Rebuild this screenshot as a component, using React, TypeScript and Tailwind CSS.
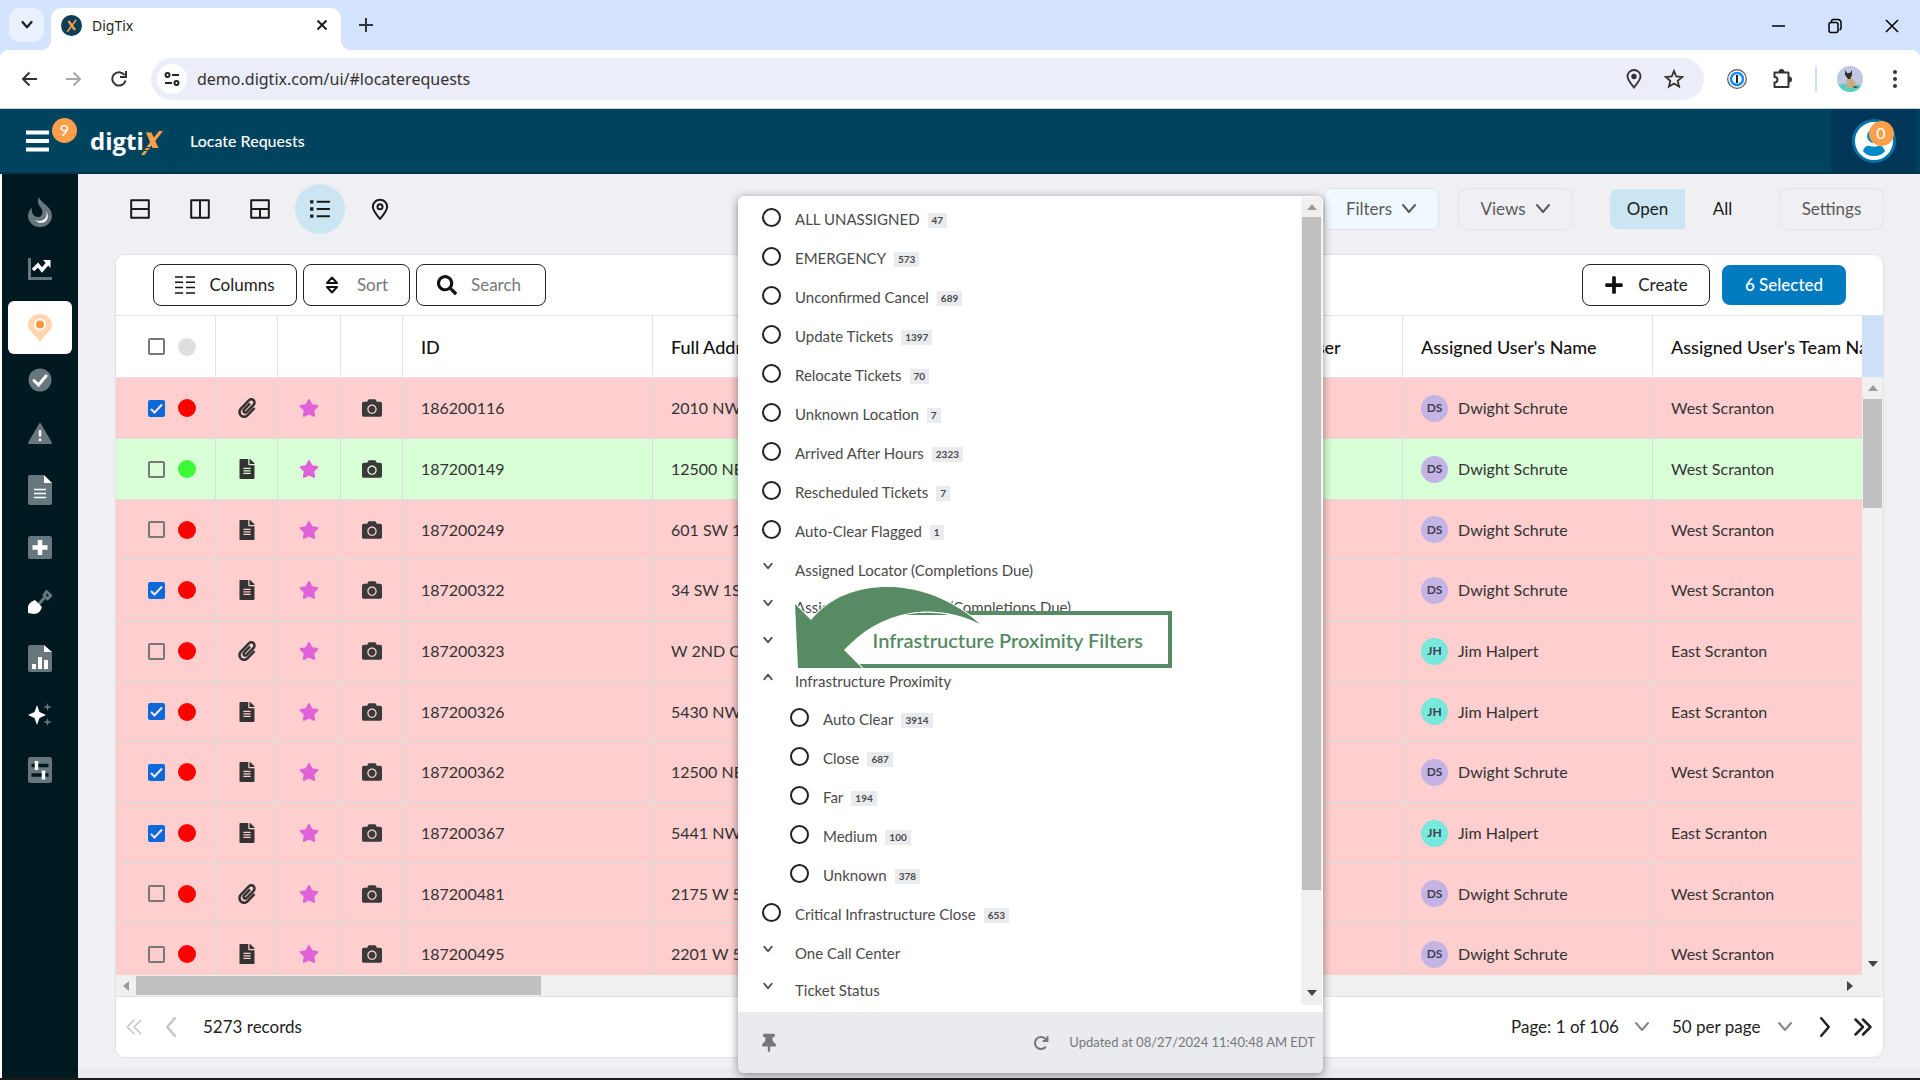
import type { ReactNode } from 'react';
import { FaCamera, FaFileAlt, FaPaperclip, FaPlus, FaSearch, FaStar, FaThumbtack } from 'react-icons/fa';
import { FaArrowRotateRight } from 'react-icons/fa6';

interface Ticket {
  id: string;
  address: string;
  user: 'DS' | 'JH';
  selected?: boolean;
  clipped?: boolean;
  ok?: boolean;
}

interface FilterItem {
  label: string;
  count?: number;
  kind: 'radio' | 'group';
  open?: boolean;
  nested?: boolean;
}

const tickets: Ticket[] = [
  { id: '186200116', address: '2010 NW', user: 'DS', selected: true, clipped: true },
  { id: '187200149', address: '12500 NE', user: 'DS', ok: true },
  { id: '187200249', address: '601 SW 12', user: 'DS' },
  { id: '187200322', address: '34 SW 1ST', user: 'DS', selected: true },
  { id: '187200323', address: 'W 2ND CT', user: 'JH', clipped: true },
  { id: '187200326', address: '5430 NW', user: 'JH', selected: true },
  { id: '187200362', address: '12500 NE', user: 'DS', selected: true },
  { id: '187200367', address: '5441 NW', user: 'JH', selected: true },
  { id: '187200481', address: '2175 W 5', user: 'DS', clipped: true },
  { id: '187200495', address: '2201 W 5', user: 'DS' },
];

const users = {
  DS: { name: 'Dwight Schrute', team: 'West Scranton', color: 'bg-[#c3b4e3]' },
  JH: { name: 'Jim Halpert', team: 'East Scranton', color: 'bg-[#76e8dc]' },
};

const filters: FilterItem[] = [
  { label: 'ALL UNASSIGNED', count: 47, kind: 'radio' },
  { label: 'EMERGENCY', count: 573, kind: 'radio' },
  { label: 'Unconfirmed Cancel', count: 689, kind: 'radio' },
  { label: 'Update Tickets', count: 1397, kind: 'radio' },
  { label: 'Relocate Tickets', count: 70, kind: 'radio' },
  { label: 'Unknown Location', count: 7, kind: 'radio' },
  { label: 'Arrived After Hours', count: 2323, kind: 'radio' },
  { label: 'Rescheduled Tickets', count: 7, kind: 'radio' },
  { label: 'Auto-Clear Flagged', count: 1, kind: 'radio' },
  { label: 'Assigned Locator (Completions Due)', kind: 'group' },
  { label: 'Assigned Locator Team (Completions Due)', kind: 'group' },
  { label: 'Due', kind: 'group' },
  { label: 'Infrastructure Proximity', kind: 'group', open: true },
  { label: 'Auto Clear', count: 3914, kind: 'radio', nested: true },
  { label: 'Close', count: 687, kind: 'radio', nested: true },
  { label: 'Far', count: 194, kind: 'radio', nested: true },
  { label: 'Medium', count: 100, kind: 'radio', nested: true },
  { label: 'Unknown', count: 378, kind: 'radio', nested: true },
  { label: 'Critical Infrastructure Close', count: 653, kind: 'radio' },
  { label: 'One Call Center', kind: 'group' },
  { label: 'Ticket Status', kind: 'group' },
];

function Chevron({ className = '', d = 'M2 4l6 7 6-7', width = 2 }: { className?: string; d?: string; width?: number }) {
  return (
    <svg viewBox="0 0 16 16" className={className} fill="none" stroke="currentColor" strokeWidth={width} strokeLinecap="round" strokeLinejoin="round">
      <path d={d} />
    </svg>
  );
}

function Arrow({ dir, className = '' }: { dir: 'up' | 'down' | 'left' | 'right'; className?: string }) {
  const d = { up: 'M0 8l5-6 5 6z', down: 'M0 2l5 6 5-6z', left: 'M8 0L2 5l6 5z', right: 'M2 0l6 5-6 5z' }[dir];
  return (
    <svg viewBox="0 0 10 10" className={`size-[10px] ${className}`} fill="currentColor">
      <path d={d} />
    </svg>
  );
}

function Checkbox({ label, checked }: { label: string; checked?: boolean }) {
  return (
    <span className="relative flex size-[17px] shrink-0">
      <input
        type="checkbox"
        aria-label={label}
        defaultChecked={checked}
        className="peer size-[17px] appearance-none rounded-xs border-2 border-[#777] bg-transparent checked:border-[#0b69d9] checked:bg-[#0b69d9]"
      />
      <svg viewBox="0 0 17 17" className="pointer-events-none absolute inset-0 hidden size-[17px] peer-checked:block" fill="none" stroke="#ffe3e3" strokeWidth="2">
        <path d="M3 9l3.500 3.500L14 4.500" />
      </svg>
    </span>
  );
}

/* ---------- browser window ---------- */

function BrowserChrome() {
  return (
    <div className="bg-[#d3e3fd] font-['Noto_Sans',sans-serif] text-[#1f1f1f]">
      <div className="flex h-[50px] items-end pl-[9px]">
        <button aria-label="Search tabs" className="mb-2 flex h-[34px] w-[35px] items-center justify-center rounded-[10px] bg-[#e9f1fe]">
          <Chevron className="size-3" width={3} />
        </button>
        <div className="relative ml-[7px] flex h-[42px] w-[290px] items-center rounded-t-[10px] bg-white pr-3 pl-[10px]">
          <span className="absolute bottom-0 -left-[10px] size-[10px] bg-[radial-gradient(circle_at_0_0,#d3e3fd_10px,#fff_10px)]" />
          <span className="absolute -right-[10px] bottom-0 size-[10px] bg-[radial-gradient(circle_at_100%_0,#d3e3fd_10px,#fff_10px)]" />
          <svg viewBox="0 0 20 20" className="mb-2 size-[21px]">
            <circle cx="10" cy="10" r="10" fill="#0b3f58" />
            <path d="M6 6l2.500-.5 6 8.500-2.500.5z" fill="#f3a04b" />
            <path d="M14.500 4.500L6 16" stroke="#f3a04b" strokeWidth="1.500" />
          </svg>
          <span className="mb-[6px] ml-[10px] text-sm leading-5">DigTix</span>
          <button aria-label="Close tab" className="mb-2 ml-auto">
            <svg viewBox="0 0 14 14" className="size-[14px]" stroke="currentColor" strokeWidth="2">
              <path d="M2.500 2.500l9 9M11.500 2.500l-9 9" />
            </svg>
          </button>
        </div>
        <button aria-label="New tab" className="mb-[18px] ml-[18px]">
          <svg viewBox="0 0 14 14" className="size-[14px]" stroke="#333" strokeWidth="2">
            <path d="M7 0v14M0 7h14" />
          </svg>
        </button>
        <div className="mb-4 ml-auto flex items-center gap-[41px] pr-5">
          <button aria-label="Minimize">
            <svg viewBox="0 0 16 16" className="size-4" stroke="#000" strokeWidth="1.500"><path d="M2 8h13" /></svg>
          </button>
          <button aria-label="Restore">
            <svg viewBox="0 0 16 16" className="size-4" fill="none" stroke="#000" strokeWidth="1.500">
              <rect x="2" y="4.500" width="9" height="10" rx="2" />
              <path d="M4.500 4V2.500Q5 1.500 6.500 1.500H11a3 3 0 013 3V10q0 1.500-1.500 2" />
            </svg>
          </button>
          <button aria-label="Close window">
            <svg viewBox="0 0 16 16" className="size-4" stroke="#000" strokeWidth="1.500"><path d="M2 2l12 12M14 2L2 14" /></svg>
          </button>
        </div>
      </div>
      <div className="flex h-[59px] items-center rounded-t-lg border-b border-[#c8cfcf] bg-white pr-[15px] pl-[21px]">
        <button aria-label="Back">
          <svg viewBox="0 0 16 16" className="size-4" fill="none" stroke="#333" strokeWidth="2"><path d="M16 8H2M8.500 1.500L2 8l6.500 6.500" /></svg>
        </button>
        <button aria-label="Forward" className="ml-[29px]">
          <svg viewBox="0 0 16 16" className="size-4" fill="none" stroke="#a8a8a8" strokeWidth="2"><path d="M0 8h14M7.500 1.500L14 8l-6.500 6.500" /></svg>
        </button>
        <button aria-label="Reload" className="ml-[29px]">
          <svg viewBox="0 0 16 16" className="size-4" fill="none" stroke="#333" strokeWidth="2"><path d="M14.500 9.500A6.700 6.700 0 1113.500 4M15 0v6H9" /></svg>
        </button>
        <div className="ml-6 flex h-[42px] flex-1 items-center rounded-full bg-[#ebedf8] pr-5 pl-[6px]">
          <span className="flex size-[30px] items-center justify-center rounded-full bg-white">
            <svg viewBox="0 0 16 16" className="size-4" fill="none" stroke="#222" strokeWidth="2">
              <circle cx="3.500" cy="4" r="2" /><path d="M8 4h7M1 12h7" /><circle cx="12.500" cy="12" r="2" />
            </svg>
          </span>
          <input
            aria-label="Address"
            defaultValue="demo.digtix.com/ui/#locaterequests"
            className="ml-[10px] h-8 min-w-0 flex-1 bg-transparent text-base text-[#333] outline-none"
          />
          <svg viewBox="0 0 16 20" className="h-5 w-4" fill="none" stroke="#333" strokeWidth="1.800">
            <path d="M8 18.500C4 13.500 1.500 10.500 1.500 7.500a6.500 6.500 0 0113 0c0 3-2.500 6-6.500 11z" /><circle cx="8" cy="7.500" r="1.800" fill="#333" />
          </svg>
          <svg viewBox="0 0 20 20" className="ml-[22px] size-5" fill="none" stroke="#333" strokeWidth="1.800">
            <path d="M10 2l2.300 5.500 6 .5-4.600 3.900 1.400 5.800-5.100-3.100-5.100 3.100 1.400-5.800L1.700 8l6-.5z" />
          </svg>
        </div>
        <button aria-label="Password manager" className="ml-[23px]">
          <svg viewBox="0 0 20 20" className="size-5">
            <circle cx="10" cy="10" r="9.300" fill="#fff" stroke="#555" strokeWidth="1.200" />
            <circle cx="10" cy="10" r="6" fill="#fff" stroke="#1a8cff" strokeWidth="2.500" />
            <path d="M10 6v8" stroke="#222" strokeWidth="2" />
          </svg>
        </button>
        <button aria-label="Extensions" className="ml-[25px]">
          <svg viewBox="0 0 22 22" className="size-[22px]" fill="none" stroke="#333" strokeWidth="2" strokeLinejoin="round">
            <path d="M2.500 4.500h14v14.500h-14v-4.500c4 0 4-5.500 0-5.500z" />
            <path d="M7.500 4a2 2 0 014 0zM17 9.500a2 2 0 010 4z" fill="#333" />
          </svg>
        </button>
        <span className="ml-[21px] h-6 w-[2px] bg-[#c9dcfb]" />
        <svg viewBox="0 0 26 26" className="ml-5 size-[26px]">
          <clipPath id="profile"><circle cx="13" cy="13" r="13" /></clipPath>
          <g clipPath="url(#profile)">
            <path fill="#c0c8e4" d="M0 0h26v26H0z" />
            <path fill="#57cfc0" d="M0 19q13-3 26 1v6H0z" />
            <path fill="#c9ad80" d="M10 9h4l1 4 3 3 2 4-5 2H9l1-7z" />
            <path fill="#33302f" d="M8 4l2 3h3l2-3v5l-2 4h-2L8 9zM15 20l7 1-4 1z" />
          </g>
        </svg>
        <button aria-label="Menu" className="ml-[22px]">
          <svg viewBox="0 0 20 20" className="size-5" fill="#333"><circle cx="10" cy="3" r="2" /><circle cx="10" cy="10" r="2" /><circle cx="10" cy="17" r="2" /></svg>
        </button>
      </div>
    </div>
  );
}

/* ---------- application header ---------- */

function AppHeader() {
  return (
    <header className="flex h-[65px] shrink-0 items-stretch border-b-2 border-[#003550] bg-[#00435e] text-white">
      <div className="flex w-[172px] items-center border-r border-[#003d56] pl-[26px]">
        <button aria-label="Menu, 9 alerts" className="relative">
          <svg viewBox="0 0 23 22" className="h-[22px] w-[23px]" stroke="#fff" strokeWidth="4">
            <path d="M0 2.500h23M0 11h23M0 19.500h23" />
          </svg>
          <span className="absolute -top-3 left-[26px] flex size-[25px] items-center justify-center rounded-full bg-[#fd9f4a] text-base">9</span>
        </button>
        <a href="#home" className="ml-[41px] flex items-center">
          <span className="font-['Open_Sans',sans-serif] text-2xl leading-7 font-bold">digti</span>
          <svg viewBox="0 0 22 26" className="mt-1 -ml-[3px] h-[26px] w-[22px]" fill="#fd9f4a">
            <path d="M5 2.500h5.500l7 15.500h-6z" />
            <path d="M18 1h4L9.500 17H5.500zM5 18h4l-1.500 2h-4zM3 21h3.500L3.500 25H0z" />
          </svg>
        </a>
      </div>
      <h1 className="self-center pl-[18px] text-base font-medium">Locate Requests</h1>
      <div className="mr-1 ml-auto flex w-[85px] items-center justify-center bg-[#003657]">
        <button aria-label="Account" className="relative">
          <svg viewBox="0 0 44 44" className="size-11">
            <circle cx="22" cy="22" r="20.500" fill="#fff" stroke="#0072a8" strokeWidth="3" />
            <circle cx="22" cy="17" r="7" fill="#008ac7" />
            <path d="M11 32c1-4 4-6 7-5q4 1.500 8 0c3-1 6 1 7 5-2 3-6 5-11 5s-9-2-11-5z" fill="#008ac7" />
          </svg>
          <span className="absolute top-[2px] right-[2px] flex size-[25px] items-center justify-center rounded-full bg-[#fd9f4a] text-base">0</span>
        </button>
      </div>
    </header>
  );
}

function SideIcon({ label, active, h, children }: { label: string; active?: boolean; h: number; children: ReactNode }) {
  return (
    <a
      href={`#${label}`}
      aria-label={label}
      className={`flex items-center justify-center ${active ? 'mt-[5px] -mb-[2px] h-[53px] w-16 rounded-md bg-white' : 'py-[15px]'}`}
    >
      <svg width={24} height={h} viewBox={`0 0 24 ${h}`}>{children}</svg>
    </a>
  );
}

function Sidebar() {
  return (
    <nav className="ml-[2px] flex w-[76px] shrink-0 flex-col items-center gap-px bg-[#001820] pt-2 text-[#66777d]">
      <SideIcon label="hot" h={30}>
        <path d="M11 0c1 6 13 9 13 19a12 11 0 01-24 0c0-4 2-7 4-8-1 5 2 9 6 9s6-5 3-9c-3-4-4-6-2-11z" fill="currentColor" />
        <path d="M18 14c3 7-4 12-11 9 7 7 17 0 11-9z" fill="#fff" />
      </SideIcon>
      <SideIcon label="trends" h={22}>
        <path d="M1.500 0v20.500H24" stroke="currentColor" strokeWidth="3" fill="none" />
        <path d="M5 12l5-5 4 5 6-7" stroke="#fff" strokeWidth="3.500" fill="none" />
        <path d="M15 2h7.500v8z" fill="#fff" />
      </SideIcon>
      <SideIcon label="locate" h={28} active>
        <path d="M12 28C7 20 0 17 0 11a12 11 0 0124 0c0 6-7 9-12 17z" fill="#ffd5b0" />
        <circle cx="12" cy="10.500" r="5" fill="#fd9737" stroke="#fff" strokeWidth="2" />
      </SideIcon>
      <SideIcon label="completed" h={24}>
        <circle cx="12" cy="12" r="11.500" fill="currentColor" />
        <path d="M6 12.500l4.500 4.500L18 8" stroke="#fff" strokeWidth="3" fill="none" strokeLinecap="round" />
      </SideIcon>
      <SideIcon label="warnings" h={21}>
        <path d="M12 1l11 19H1z" fill="currentColor" stroke="currentColor" strokeWidth="2" strokeLinejoin="round" />
        <path d="M12 7v6.500M12 15.500v2.500" stroke="#fff" strokeWidth="2.500" />
      </SideIcon>
      <SideIcon label="documents" h={30}>
        <path d="M2 0h14v8h8v20q0 2-2 2H2q-2 0-2-2V2q0-2 2-2z" fill="currentColor" />
        <path d="M16 0l8 8h-8z" fill="#fff" />
        <path d="M6 14.500h12M6 18.500h12M6 22.500h12" stroke="#fff" strokeWidth="1.500" />
      </SideIcon>
      <SideIcon label="new" h={23}>
        <rect width="24" height="23" rx="2.500" fill="currentColor" />
        <path d="M12 4v15M4.500 11.500h15" stroke="#fff" strokeWidth="4.500" />
      </SideIcon>
      <SideIcon label="dig" h={24}>
        <path d="M10 15l8-9" stroke="currentColor" strokeWidth="3" />
        <path d="M16 5l2.500-3.500 4.500 4-3.500 3.500z" fill="none" stroke="currentColor" strokeWidth="3" strokeLinejoin="round" />
        <path d="M0 23v-6q0-4 7-7l7 7q-2 7-8 7z" fill="#fff" />
      </SideIcon>
      <SideIcon label="reports" h={27}>
        <path d="M2 0h14v7h8v18q0 2-2 2H2q-2 0-2-2V2q0-2 2-2z" fill="currentColor" />
        <path d="M16 0l8 7h-8z" fill="#fff" />
        <path d="M6 24v-5M12 24V12M18 24v-9" stroke="#fff" strokeWidth="4" />
      </SideIcon>
      <SideIcon label="assistant" h={23}>
        <path d="M9 2l2.500 7L18 12l-6.500 3L9 22l-2.500-7L0 12l6.500-3z" fill="#fff" />
        <path d="M19.500 0l1 3 3.500 1-3.500 1-1 3-1-3L15 4l3.500-1zM19.500 15l1 3 3.500 1-3.500 1-1 3-1-3-3.500-1 3.500-1z" fill="currentColor" />
      </SideIcon>
      <SideIcon label="preferences" h={26}>
        <rect width="24" height="26" rx="2.500" fill="currentColor" />
        <path d="M3.500 8.500h17M3.500 18h17" stroke="#001820" strokeWidth="3.500" />
        <path d="M8.500 4v9M15.500 13.500v9" stroke="#fff" strokeWidth="3.500" />
      </SideIcon>
    </nav>
  );
}

/* ---------- view bar and filter menu ---------- */

const viewModes = [
  { name: 'Rows', icon: <path d="M2 2h16v16H2zM2 10h16" /> },
  { name: 'Columns', icon: <path d="M2 2h16v16H2zM10 2v16" /> },
  { name: 'Split', icon: <path d="M2 2h16v16H2zM2 10h16M10 10v8" /> },
  {
    name: 'List',
    icon: (
      <>
        <path d="M7 3.500h12M7 10h12M7 16.500h12" />
        <path d="M1 3.500h3M1 10h3M1 16.500h3" strokeWidth="3" />
      </>
    ),
  },
  { name: 'Map', icon: <><path d="M10 19C6 14.500 3.500 11 3.500 8a6.500 6.500 0 0113 0c0 3-2.500 6.500-6.500 11z" /><circle cx="10" cy="8" r="2.300" /></> },
];

function FilterRow({ item }: { item: FilterItem }) {
  if (item.kind === 'group') {
    return (
      <li className={item.open ? 'h-[38px]' : 'h-[37px]'}>
        <button aria-expanded={!!item.open} className="flex items-start">
          <Chevron className="mt-[7px] mr-[21px] size-3" width={2.500} d={item.open ? 'M3 11l5-6 5 6' : 'M3 5l5 6 5-6'} />
          <span className="leading-[34px]">{item.label}</span>
        </button>
      </li>
    );
  }
  return (
    <li className={item.nested ? 'h-[39px] pl-7' : 'h-[39px]'}>
      <label className="flex w-fit items-start">
        <input
          type="radio"
          name="filter"
          className="mt-[6px] mr-[14px] size-[19px] appearance-none rounded-full border-2 border-[#222] checked:border-[6px]"
        />
        <span className="leading-[34px]">{item.label}</span>
        <span className="mt-[11px] ml-2 bg-[#eaebef] px-1 text-[10px] leading-[15px] font-bold">{item.count}</span>
      </label>
    </li>
  );
}

function FilterMenu() {
  return (
    <div className="absolute top-2 right-full z-10 mr-px flex h-[877px] w-[585px] flex-col overflow-hidden rounded-md bg-white text-[#4a4a4a] shadow-[0_2px_10px_rgba(0,0,0,0.45)]">
      <div className="flex min-h-0 flex-1">
        <ul className="flex-1 overflow-hidden pt-[6px] pl-6 text-[15px]">
          {filters.map((item) => (
            <FilterRow key={item.label} item={item} />
          ))}
        </ul>
        <div className="mt-px mr-px mb-[7px] flex w-[21px] flex-col items-center bg-[#f0f0f0]">
          <Arrow dir="up" className="my-[5px] text-[#9a9a9a]" />
          <div className="h-[673px] w-[19px] bg-[#c0c0c0]" />
          <Arrow dir="down" className="mt-auto mb-[7px] text-[#444]" />
        </div>
      </div>
      <div className="flex h-[61px] items-center bg-[#eaebef] pr-2 pl-6 text-[13px] text-[#75787b]">
        <button aria-label="Pin menu"><FaThumbtack className="h-5 w-[14px]" /></button>
        <button aria-label="Refresh" className="ml-auto"><FaArrowRotateRight className="size-4" /></button>
        <span className="ml-5 whitespace-nowrap">Updated at 08/27/2024 11:40:48 AM EDT</span>
      </div>

      {/* callout over the proximity group */}
      <div className="absolute top-[415px] left-[106px] flex h-[57px] w-[328px] items-center justify-end border-4 border-[#578b64] bg-white pr-[25px] text-xl font-semibold whitespace-nowrap text-[#578b64]">
        Infrastructure Proximity Filters
      </div>
      <svg viewBox="793 583 190 88" className="pointer-events-none absolute top-[387px] left-[55px] h-[88px] w-[190px]">
        <path d="M840 615h36l-14 48h-22zM866 615h90l-90 14zM844 613h80v-3h-80z" fill="#fff" />
        <path
          d="M795 604l16 16c20-24 48-34 82-33 36 2 66 18 87 37-27-13-50-14-70-11-28 5-48 18-66 37l18 18h-64z"
          fill="#578b64"
          stroke="#fff"
          strokeWidth="2"
          paintOrder="stroke"
        />
      </svg>
    </div>
  );
}

function ViewBar() {
  return (
    <div className="flex h-20 shrink-0 items-start pt-[10px] pr-9 pl-[37px]">
      <div className="flex items-center gap-[10px]">
        {viewModes.map((mode) => (
          <button
            key={mode.name}
            aria-label={mode.name}
            className={`flex size-[50px] items-center justify-center rounded-full ${mode.name === 'List' ? 'bg-[#cbe5f3]' : ''}`}
          >
            <svg viewBox="0 0 20 20" className="size-[22px]" fill="none" stroke="#1a1a1a" strokeWidth="1.800" strokeLinejoin="round">{mode.icon}</svg>
          </button>
        ))}
      </div>
      <div className="mt-1 ml-auto flex items-center text-[17px] text-[#5a5a5a]">
        <div className="relative">
          <button className="flex h-[42px] w-[115px] items-center justify-center gap-[9px] rounded-lg border border-[#e1e3e8] bg-[#f0f9ff]">
            Filters <Chevron className="size-4" />
          </button>
          <FilterMenu />
        </div>
        <button className="ml-[19px] flex h-[42px] w-[115px] items-center justify-center gap-[9px] rounded-lg border border-[#e1e3e8]">
          Views <Chevron className="size-4" />
        </button>
        <button className="ml-[37px] h-10 w-[75px] rounded-l-lg bg-[#cbe5f3] text-[#1a1a1a]">Open</button>
        <button className="h-10 w-[75px] text-[#1a1a1a]">All</button>
        <button className="ml-[19px] h-[42px] w-[105px] rounded-lg border border-[#e1e3e8]">Settings</button>
      </div>
    </div>
  );
}

/* ---------- ticket grid ---------- */

function TicketRow({ ticket }: { ticket: Ticket }) {
  const user = users[ticket.user];
  const cell = 'border-r border-b border-[#dcdcdf] overflow-hidden whitespace-nowrap';
  return (
    <tr className={`h-[61px] nth-[3n]:h-[60px] ${ticket.ok ? 'bg-[#d8ffd6]' : 'bg-[#ffcece]'}`}>
      <td className={cell}>
        <div className="flex items-center gap-[13px] pl-8">
          <Checkbox label={`Select ticket ${ticket.id}`} checked={ticket.selected} />
          <span className={`size-[18px] rounded-full ${ticket.ok ? 'bg-[#3df936]' : 'bg-[#ff0000]'}`} />
        </div>
      </td>
      <td className={cell}>
        {ticket.clipped ? <FaPaperclip className="mx-auto size-5 text-[#333]" /> : <FaFileAlt className="mx-auto size-5 text-[#333]" />}
      </td>
      <td className={cell}><FaStar className="mx-auto size-5 text-[#e062d8]" /></td>
      <td className={cell}><FaCamera className="mx-auto size-5 text-[#3a3a3a]" /></td>
      <td className={`${cell} pl-[18px]`}>{ticket.id}</td>
      <td className={`${cell} pl-[18px]`}>{ticket.address}</td>
      <td className={cell} />
      <td className={cell} />
      <td className={cell}>
        <div className="flex items-center pl-[18px]">
          <span className={`flex size-[27px] items-center justify-center rounded-full text-xs font-bold text-[#3f3f50] ${user.color}`}>{ticket.user}</span>
          <span className="ml-[10px]">{user.name}</span>
        </div>
      </td>
      <td className={`${cell} pl-[18px]`}>{user.team}</td>
    </tr>
  );
}

function TicketTable() {
  const head = 'border-r border-b border-[#e1e2e6] pl-[18px] text-left font-medium whitespace-nowrap';
  return (
    <div className="flex min-h-0 flex-1 border-t border-[#e1e2e6]">
      <div className="min-w-0 flex-1 overflow-hidden">
        <table className="w-[1787px] table-fixed border-separate border-spacing-0 text-base text-[#333]">
          <colgroup>
            <col className="w-[100px]" />
            <col className="w-[62px]" />
            <col className="w-[63px]" />
            <col className="w-[62px]" />
            <col className="w-[250px]" span={6} />
          </colgroup>
          <thead>
            <tr className="h-[62px] text-lg text-[#111]">
              <th className="border-r border-b border-[#e1e2e6]">
                <div className="flex items-center gap-[13px] pl-8">
                  <Checkbox label="Select all tickets" />
                  <span className="size-[18px] rounded-full bg-[#dddee0]" />
                </div>
              </th>
              <th className={head} />
              <th className={head} />
              <th className={head} />
              <th className={head}>ID</th>
              <th className={head}>Full Address</th>
              <th className={head} />
              <th className={head}>Assigned Locate User</th>
              <th className={head}>Assigned User's Name</th>
              <th className={head}>Assigned User's Team Name</th>
            </tr>
          </thead>
          <tbody>
            {tickets.map((ticket) => (
              <TicketRow key={ticket.id} ticket={ticket} />
            ))}
          </tbody>
        </table>
      </div>
      <div className="flex w-[21px] flex-col items-center bg-[#f0f0f0]">
        <div className="h-[61px] w-full shrink-0 bg-[#cde0f7]" />
        <Arrow dir="up" className="my-[6px] text-[#9a9a9a]" />
        <div className="h-[109px] w-[19px] bg-[#c0c0c0]" />
        <Arrow dir="down" className="mt-auto mb-[6px] text-[#444]" />
      </div>
    </div>
  );
}

const toolButton = 'flex h-[42px] items-center rounded-lg border border-[#222]';

function TicketCard() {
  return (
    <section className="mr-9 mb-[11px] ml-[37px] flex min-h-0 flex-1 flex-col overflow-hidden rounded-[10px] border border-[#e1e2e6] bg-white text-[17px] text-[#222]">
      <div className="flex h-[60px] shrink-0 items-center gap-[6px] px-[37px]">
        <button className={`${toolButton} w-36 justify-center gap-[14px]`}>
          <svg viewBox="0 0 20 20" className="size-5" stroke="#111" strokeWidth="1.500">
            <path d="M0 2h8M0 7.300h8M0 12.600h8M0 18h8M11 2h9M11 7.300h9M11 12.600h9M11 18h9" />
          </svg>
          Columns
        </button>
        <button className={`${toolButton} w-[107px] justify-center gap-[18px] text-[#75787b]`}>
          <svg viewBox="0 0 14 18" className="h-[18px] w-[14px]" fill="none" stroke="#111" strokeWidth="2" strokeLinejoin="round">
            <path d="M2 7l5-5.500L12 7zM2 11l5 5.500 5-5.500z" />
          </svg>
          Sort
        </button>
        <label className={`${toolButton} w-[130px] gap-[14px] pl-5`}>
          <FaSearch className="size-5 shrink-0 text-[#111]" />
          <input aria-label="Search" placeholder="Search" className="w-full min-w-0 bg-transparent outline-none placeholder:text-[#75787b]" />
        </label>
        <button className={`${toolButton} ml-auto w-32 justify-center gap-[14px]`}>
          <FaPlus className="size-5 text-[#111]" /> Create
        </button>
        <button className="ml-[6px] h-10 w-[124px] rounded-lg bg-[#007bc0] font-medium text-white">6 Selected</button>
      </div>
      <TicketTable />
      <div className="flex h-[22px] shrink-0 items-center border-b border-[#e1e2e6] bg-[#f0f0f0] pl-[5px]">
        <Arrow dir="left" className="text-[#9a9a9a]" />
        <div className="ml-[5px] h-[19px] w-[405px] bg-[#c0c0c0]" />
        <Arrow dir="right" className="mr-7 ml-auto text-[#444]" />
      </div>
      <div className="flex h-[60px] shrink-0 items-center pr-[10px] pl-[9px]">
        <button aria-label="First page" className="flex text-[#c3c6ca]">
          <Chevron className="size-[18px]" width={1.500} d="M8 2L2 8l6 6M14 2L8 8l6 6" />
        </button>
        <button aria-label="Previous page" className="ml-[18px] text-[#c3c6ca]">
          <Chevron className="size-5" d="M11 1L5 8l6 7" />
        </button>
        <span className="ml-[22px]">5273 records</span>
        <div className="relative ml-auto flex items-center">
          <select aria-label="Page" className="w-[139px] appearance-none bg-transparent outline-none">
            <option>Page: 1 of 106</option>
          </select>
          <Chevron className="pointer-events-none absolute right-0 size-4 text-[#85888b]" />
        </div>
        <div className="relative ml-[22px] flex items-center">
          <select aria-label="Rows per page" className="w-[121px] appearance-none bg-transparent outline-none">
            <option>50 per page</option>
          </select>
          <Chevron className="pointer-events-none absolute right-0 size-4 text-[#85888b]" />
        </div>
        <button aria-label="Next page" className="ml-[22px]">
          <Chevron className="size-5" d="M5 1l6 7-6 7" />
        </button>
        <button aria-label="Last page" className="ml-[18px]">
          <Chevron className="size-5" d="M2 2l6 6-6 6M8 2l6 6-6 6" />
        </button>
      </div>
    </section>
  );
}

export default function App() {
  return (
    <div className="flex h-screen flex-col overflow-hidden border-b-2 border-[#1a1a1a] bg-white font-[Lato,sans-serif]">
      <BrowserChrome />
      <AppHeader />
      <div className="flex min-h-0 flex-1">
        <Sidebar />
        <main className="flex min-w-0 flex-1 flex-col bg-[#f0eff4]">
          <ViewBar />
          <TicketCard />
          <div className="h-[9px] shrink-0 bg-[#eaebef]" />
        </main>
      </div>
    </div>
  );
}
